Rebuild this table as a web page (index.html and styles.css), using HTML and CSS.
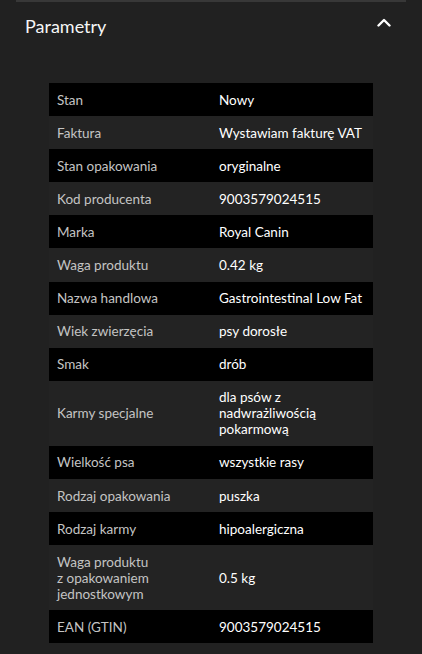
FILE: index.html
```html
<!DOCTYPE html>
<html lang="pl">
<head>
<meta charset="utf-8">
<link rel="stylesheet" href="styles.css">
</head>
<body>
<section class="panel">
  <div class="top-line"></div>
  <div class="panel-head">
    <h2 class="panel-title">Parametry</h2>
    <svg class="chevron" width="14" height="9" viewBox="0 0 14 9"><path d="M1.5 7.5 L7 2 L12.5 7.5" fill="none" stroke="#fff" stroke-width="2.4" stroke-linecap="round" stroke-linejoin="round"/></svg>
  </div>
  <div class="params">
    <div class="row dark"><div class="k">Stan</div><div class="v">Nowy</div></div>
    <div class="row"><div class="k">Faktura</div><div class="v">Wystawiam fakturę VAT</div></div>
    <div class="row dark"><div class="k">Stan opakowania</div><div class="v">oryginalne</div></div>
    <div class="row"><div class="k">Kod producenta</div><div class="v">9003579024515</div></div>
    <div class="row dark"><div class="k">Marka</div><div class="v">Royal Canin</div></div>
    <div class="row"><div class="k">Waga produktu</div><div class="v">0.42 kg</div></div>
    <div class="row dark"><div class="k">Nazwa handlowa</div><div class="v">Gastrointestinal Low Fat</div></div>
    <div class="row"><div class="k">Wiek zwierzęcia</div><div class="v">psy dorosłe</div></div>
    <div class="row dark"><div class="k">Smak</div><div class="v">drób</div></div>
    <div class="row"><div class="k">Karmy specjalne</div><div class="v">dla psów z<br>nadwrażliwością<br>pokarmową</div></div>
    <div class="row dark"><div class="k">Wielkość psa</div><div class="v">wszystkie rasy</div></div>
    <div class="row"><div class="k">Rodzaj opakowania</div><div class="v">puszka</div></div>
    <div class="row dark"><div class="k">Rodzaj karmy</div><div class="v">hipoalergiczna</div></div>
    <div class="row"><div class="k">Waga produktu<br>z opakowaniem<br>jednostkowym</div><div class="v">0.5 kg</div></div>
    <div class="row dark"><div class="k">EAN (GTIN)</div><div class="v">9003579024515</div></div>
  </div>
</section>
</body>
</html>
```

FILE: styles.css
```css
html, body {
  margin: 0;
  padding: 0;
  background: #212121;
  font-family: "Lato", "Open Sans", sans-serif;
}

.panel {
  margin: 0 16px;
}

.top-line {
  height: 2px;
  background: #383838;
}

.panel-head {
  display: flex;
  justify-content: space-between;
  align-items: flex-start;
  padding: 0 15px 0 9px;
}

.panel-title {
  margin: 13px 0 0;
  font-size: 18px;
  line-height: 22px;
  font-weight: 400;
  color: #f6f6f6;
}

.chevron {
  margin-top: 16px;
}

.params {
  margin: 46px 33px 0;
}

.row {
  display: grid;
  grid-template-columns: 1fr 1fr;
  align-items: center;
  background: #232323;
  padding: 8.55px 0;
}

.row.dark {
  background: #000;
}

.k, .v {
  padding: 0 8px;
  font-size: 13.5px;
  line-height: 16px;
}

.v {
  padding-right: 2px;
  color: #ffffff;
  font-weight: 400;
}

.k {
  color: #c4c4c4;
}
```
